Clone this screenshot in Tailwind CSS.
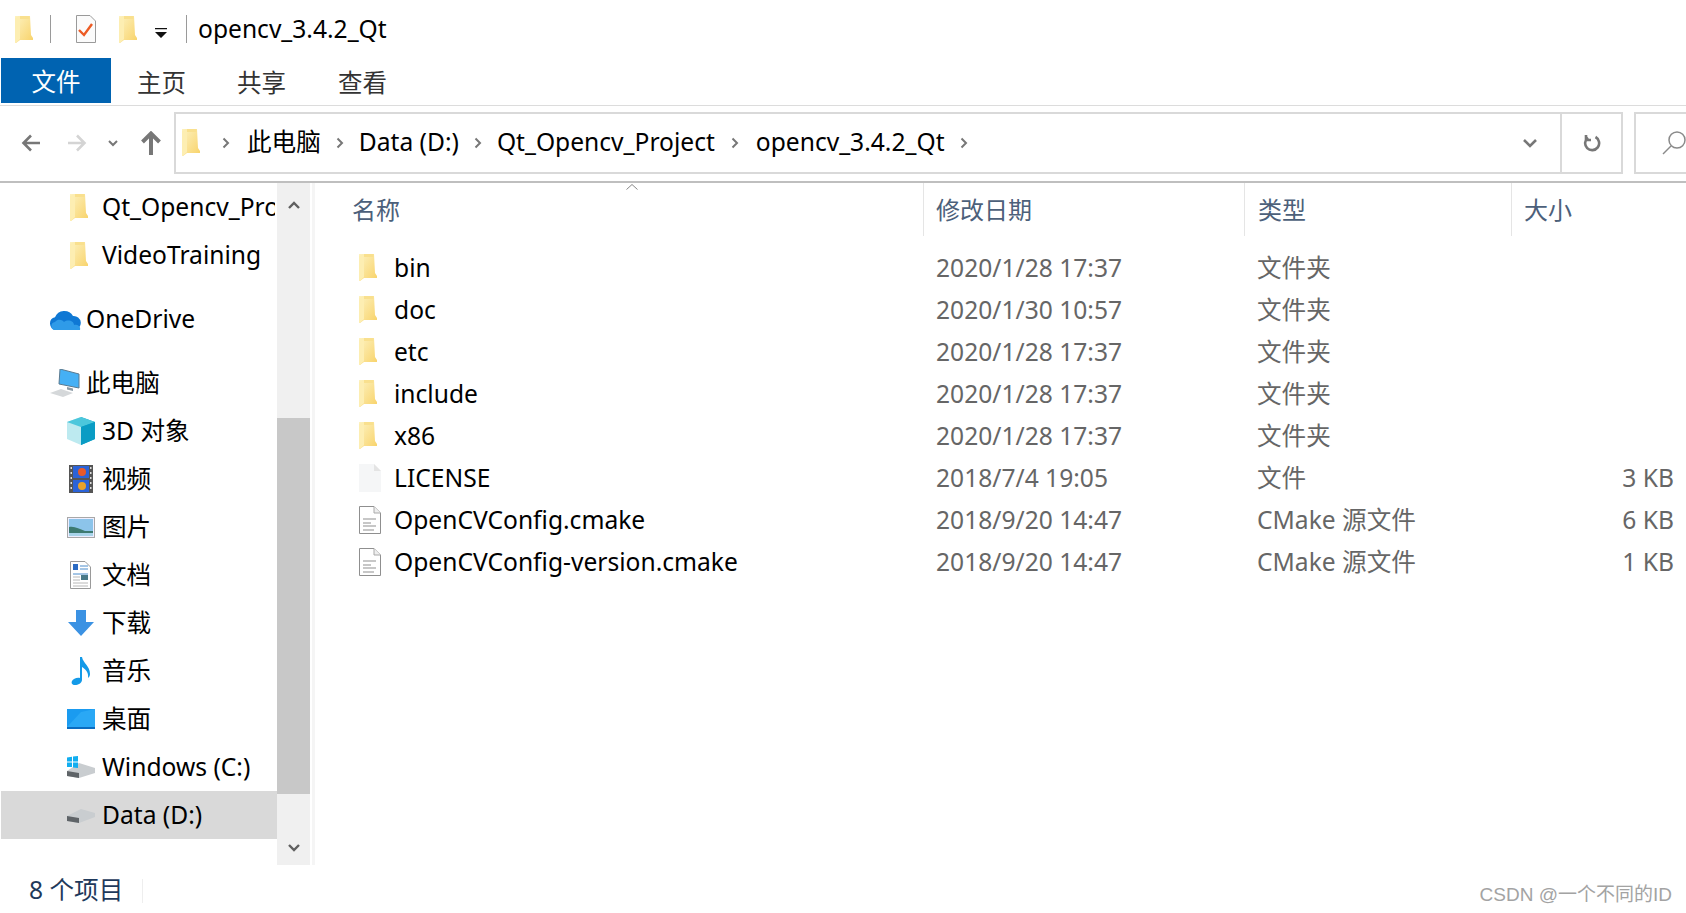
<!DOCTYPE html>
<html lang="zh">
<head>
  <meta charset="UTF-8" />
  <title>opencv_3.4.2_Qt</title>
  <script src="https://cdn.jsdelivr.net/npm/@tailwindcss/browser@4"></script>
</head>
<body class="bg-white text-black overflow-hidden font-['Noto_Sans','Noto_Sans_CJK_SC',sans-serif]">

  <!-- shared icons -->
  <svg class="absolute w-0 h-0">
    <defs>
      <linearGradient id="fg" x1="0" y1="0" x2="1" y2="1">
        <stop offset="0" stop-color="#fdf2c0" />
        <stop offset="1" stop-color="#f8d268" />
      </linearGradient>
      <symbol id="folder" viewBox="0 0 18 27">
        <path d="M0 0H15L16 19L18 22V24H5L1 27H0Z" fill="url(#fg)" />
        <path d="M0 2L5 0V23L1 27H0Z" fill="#fdeeb2" />
        <path d="M5 0H14.500V3H5Z" fill="#f9e08e" />
      </symbol>
      <symbol id="textfile" viewBox="0 0 22 28">
        <path d="M.5 .5H15L21.500 7V27.500H.5Z" fill="#fff" stroke="#8f8f8f" />
        <path d="M15 .5V7H21.500" fill="#eee" stroke="#aaa" />
        <path d="M4 13H17M4 17H12M4 20H17M4 24H15" stroke="#b5b5b5" stroke-width="1.500" />
      </symbol>
    </defs>
  </svg>

  <!-- Title bar -->
  <div class="h-[58px] flex items-center">
    <svg class="w-[18px] h-[27px] ml-[15px]"><use href="#folder" /></svg>
    <div class="w-px h-[28px] bg-[#9a9a9a] ml-[17px]"></div>
    <svg class="w-[20px] h-[28px] ml-[25px]" viewBox="0 0 20 28">
      <path d="M.5 .5H14L19.500 6V27.500H.5Z" fill="#fbfbfb" stroke="#9a9a9a" />
      <path d="M3 15L8 20L16 9" fill="none" stroke="#ec5b24" stroke-width="2.400" />
    </svg>
    <svg class="w-[18px] h-[27px] ml-[23px]"><use href="#folder" /></svg>
    <svg class="w-[14px] h-[14px] ml-[17px] mt-2" viewBox="0 0 14 14">
      <path d="M1 2H13V3.200H1ZM1 6H13L7 12Z" fill="#111" />
    </svg>
    <div class="w-px h-[28px] bg-[#9a9a9a] ml-[18px]"></div>
    <span class="ml-[11px] text-[24.6px] leading-none">opencv_3.4.2_Qt</span>
  </div>

  <!-- Ribbon tabs -->
  <div class="h-[48px] flex items-stretch border-b border-[#dcdcdc] text-[24.5px] text-[#333]">
    <div class="ml-px w-[110px] h-[45px] bg-[#0063b1] text-white flex items-center justify-center pt-[3px]">文件</div>
    <div class="w-[101px] flex items-center justify-center pt-[3px]">主页</div>
    <div class="w-[99px] flex items-center justify-center pt-[3px]">共享</div>
    <div class="w-[103px] flex items-center justify-center pt-[3px]">查看</div>
  </div>

  <!-- Nav row -->
  <div class="h-[77px] flex items-center border-b-2 border-[#bfbfbf] pb-[2px] text-[24.6px]">
    <svg class="w-5 h-5 ml-[21px]" viewBox="0 0 20 20" fill="none" stroke="#777" stroke-width="2.600"><path d="M19 10H2M10 2.500L2.500 10L10 17.500" /></svg>
    <svg class="w-5 h-5 ml-[26px]" viewBox="0 0 20 20" fill="none" stroke="#d4d4d4" stroke-width="2.600"><path d="M1 10H18M10 2.500L17.500 10L10 17.500" /></svg>
    <svg class="w-[10px] h-[10px] ml-[21px]" viewBox="0 0 10 10" fill="none" stroke="#777" stroke-width="2"><path d="M1 3L5 7L9 3" /></svg>
    <svg class="w-5 h-[24px] ml-[23px]" viewBox="0 0 20 24" fill="none" stroke="#777" stroke-width="4"><path d="M10 24V3M1.500 11L10 2.500L18.500 11" /></svg>
    <div class="ml-[13px] w-[1450px] h-[62px] border-2 border-[#d9d9d9] flex items-center">
      <svg class="w-[18px] h-[27px] ml-[6px]"><use href="#folder" /></svg>
      <svg class="w-2 h-3 ml-[22px]" viewBox="0 0 8 12" fill="none" stroke="#777" stroke-width="2"><path d="M1.500 1.500L6 6L1.500 10.500" /></svg>
      <span class="ml-[17px]">此电脑</span>
      <svg class="w-2 h-3 ml-[15px]" viewBox="0 0 8 12" fill="none" stroke="#777" stroke-width="2"><path d="M1.500 1.500L6 6L1.500 10.500" /></svg>
      <span class="ml-[15px]">Data (D:)</span>
      <svg class="w-2 h-3 ml-[15px]" viewBox="0 0 8 12" fill="none" stroke="#777" stroke-width="2"><path d="M1.500 1.500L6 6L1.500 10.500" /></svg>
      <span class="ml-[15px]">Qt_Opencv_Project</span>
      <svg class="w-2 h-3 ml-[16px]" viewBox="0 0 8 12" fill="none" stroke="#777" stroke-width="2"><path d="M1.500 1.500L6 6L1.500 10.500" /></svg>
      <span class="ml-[17px]">opencv_3.4.2_Qt</span>
      <svg class="w-2 h-3 ml-[15px]" viewBox="0 0 8 12" fill="none" stroke="#777" stroke-width="2"><path d="M1.500 1.500L6 6L1.500 10.500" /></svg>
      <svg class="w-[14px] h-[10px] ml-auto mr-[23px]" viewBox="0 0 14 10" fill="none" stroke="#777" stroke-width="2.600"><path d="M1 2L7 8L13 2" /></svg>
      <div class="w-[61px] h-full border-l-2 border-[#d9d9d9] flex items-center justify-center">
        <svg class="w-[18px] h-[18px]" viewBox="0 0 18 18" fill="none" stroke="#777" stroke-width="2.600"><path d="M5 3.500A7 7 0 1 0 12.500 3M3 1V6H8" /></svg>
      </div>
    </div>
    <div class="ml-[11px] flex-1 h-[62px] border-2 border-r-0 border-[#d9d9d9] flex items-center">
      <svg class="ml-[26px] w-[24px] h-[26px]" viewBox="0 0 24 26" fill="none" stroke="#8a8a8a" stroke-width="1.500"><circle cx="15" cy="10" r="8" /><path d="M9 16L1 24" /></svg>
    </div>
  </div>

  <div class="h-[682px] flex">
    <!-- Sidebar -->
    <div class="w-[277px] shrink-0 text-[24.6px]">
      <div class="h-[48px] w-[275px] overflow-hidden flex items-center pl-[70px] gap-[14px] whitespace-nowrap"><svg class="w-[18px] h-[27px] shrink-0"><use href="#folder" /></svg><span>Qt_Opencv_Project</span></div>
      <div class="h-[48px] flex items-center pl-[70px] gap-[14px]"><svg class="w-[18px] h-[27px] shrink-0"><use href="#folder" /></svg><span>VideoTraining</span></div>
      <div class="h-[64px] mt-[8px] flex items-center pl-[49px] gap-[5px]">
        <svg class="w-8 h-[21px]" viewBox="0 0 32 21">
          <path d="M7 21A6.500 6.500 0 0 1 6 8.200A10 10 0 0 1 24 7A7 7 0 0 1 25.500 21Z" fill="#0f78d4" />
          <path d="M7 21A4 4 0 0 1 6 13C9 9 14 11 15 13C19 10 25 12 25 16C29 15 32 18 31 21Z" fill="#2f9be8" />
        </svg>
        <span>OneDrive</span>
      </div>
      <div class="h-[64px] flex items-center pl-[49px] gap-[6px]">
        <svg class="w-[31px] h-[28px]" viewBox="0 0 31 28">
          <path d="M11 0L30 5V19L10 15Z" fill="#45b0f5" stroke="#5a7a90" />
          <path d="M18 18L24 19.500V22L18 20.500Z" fill="#8a9aa5" />
          <path d="M1 24L12 20L24 24L14 28Z" fill="#d5d8da" />
        </svg>
        <span>此电脑</span>
      </div>
      <div class="h-[48px] -mt-[8px] flex items-center pl-[67px] gap-[7px]">
        <svg class="w-[28px] h-[28px]" viewBox="0 0 28 28">
          <path d="M14 0L28 5V22L14 28Z" fill="#0da5c9" />
          <path d="M14 0L0 5V22L14 28Z" fill="#bdeaf0" />
          <path d="M0 5L14 10L28 5L14 0Z" fill="#4cc7dc" />
          <path d="M14 10V28L28 22V5Z" fill="#0a9cc4" />
        </svg>
        <span>3D 对象</span>
      </div>
      <div class="h-[48px] flex items-center pl-[69px] gap-[9px]">
        <svg class="w-6 h-7" viewBox="0 0 24 28">
          <rect width="24" height="28" fill="#555" />
          <rect x="4" y="1" width="16" height="12" fill="#2b63d8" />
          <rect x="4" y="15" width="16" height="12" fill="#2b63d8" />
          <circle cx="13" cy="7" r="4" fill="#e85a2a" />
          <circle cx="13" cy="21" r="4" fill="#e8a22a" />
          <path d="M1.500 3H3M1.500 8H3M1.500 13H3M1.500 18H3M1.500 23H3M21 3H22.500M21 8H22.500M21 13H22.500M21 18H22.500M21 23H22.500" stroke="#ddd" stroke-width="2" />
        </svg>
        <span>视频</span>
      </div>
      <div class="h-[48px] flex items-center pl-[67px] gap-[7px]">
        <svg class="w-7 h-[21px]" viewBox="0 0 28 21">
          <rect x=".5" y=".5" width="27" height="20" fill="#eef" stroke="#a8a8a8" />
          <rect x="2" y="2" width="24" height="17" fill="#8cc4ea" />
          <path d="M2 10C8 9 12 12 18 14H26V19H2Z" fill="#3d7a70" />
          <path d="M2 16H26V19H2Z" fill="#a8d4ea" />
        </svg>
        <span>图片</span>
      </div>
      <div class="h-[48px] flex items-center pl-[70px] gap-[11px]">
        <svg class="w-[21px] h-7" viewBox="0 0 21 28">
          <path d="M.5 .5H15L20.500 6V27.500H.5Z" fill="#fff" stroke="#9a9a9a" />
          <path d="M3 3H8V9H3Z" fill="#2c6bc4" />
          <path d="M10 5H18M10 8H18M3 13H18" stroke="#4a8ccc" />
          <rect x="11" y="14" width="7" height="5" fill="#4a7a88" />
          <path d="M3 16H10M3 19H10M3 22H18M3 25H18" stroke="#b8b8b8" />
        </svg>
        <span>文档</span>
      </div>
      <div class="h-[48px] flex items-center pl-[68px] gap-[8px]">
        <svg class="w-[26px] h-[26px]" viewBox="0 0 26 26"><path d="M8 0H18V12H26L13 26L0 12H8Z" fill="#3b92e3" /></svg>
        <span>下载</span>
      </div>
      <div class="h-[48px] flex items-center pl-[71px] gap-[11px]">
        <svg class="w-[20px] h-7" viewBox="0 0 20 28">
          <path d="M9 0H11C12 6 19 9 19 17C19 19 18 20 17 21C18 15 14 12 11 10V23C11 26 7 28 4 28C1 28 0 26 1 24C2 22 6 20 9 21Z" fill="#149ae8" />
        </svg>
        <span>音乐</span>
      </div>
      <div class="h-[48px] flex items-center pl-[67px] gap-[7px]">
        <svg class="w-7 h-5" viewBox="0 0 28 20">
          <rect width="28" height="20" fill="#1a9bf0" />
          <path d="M0 18L14 3L28 0V18Z" fill="#2aa8f5" />
          <path d="M0 18H28V20H0Z" fill="#0a6cc0" />
        </svg>
        <span>桌面</span>
      </div>
      <div class="h-[48px] flex items-center pl-[67px] gap-[7px]">
        <svg class="w-7 h-[22px]" viewBox="0 0 28 22">
          <path d="M0 15L12 7L28 12V17L12 22L0 20Z" fill="#c9cdd0" />
          <path d="M0 15L12 17V22L0 20Z" fill="#5f6468" />
          <path d="M0 1.500L5 .7V5.500H0ZM6 .5L11 0V5.500H6ZM0 6.500H5V11H0ZM6 6.500H11V12L6 11.500Z" fill="#12aef0" />
        </svg>
        <span>Windows (C:)</span>
      </div>
      <div class="h-[48px] ml-px bg-[#d9d9d9] flex items-center pl-[66px] gap-[7px]">
        <svg class="w-7 h-[15px]" viewBox="0 0 28 15">
          <path d="M0 8L14 1L28 5V9L12 15L0 13Z" fill="#c9cdd0" />
          <path d="M0 8L12 10V15L0 13Z" fill="#5f6468" />
        </svg>
        <span>Data (D:)</span>
      </div>
    </div>

    <!-- Sidebar scrollbar -->
    <div class="w-[33px] shrink-0 bg-[#f0f0f0] flex flex-col items-center">
      <div class="h-[44px] w-full flex items-center justify-center">
        <svg class="w-3 h-2" viewBox="0 0 12 8" fill="none" stroke="#606060" stroke-width="2.400"><path d="M1 7L6 2L11 7" /></svg>
      </div>
      <div class="h-[191px]"></div>
      <div class="w-full h-[376px] bg-[#c8c8c8]"></div>
      <div class="mt-auto h-[34px] w-full flex items-center justify-center">
        <svg class="w-3 h-2" viewBox="0 0 12 8" fill="none" stroke="#606060" stroke-width="2.400"><path d="M1 1L6 6L11 1" /></svg>
      </div>
    </div>
    <div class="w-[3px] ml-[2px] bg-[#f5f5f5]"></div>

    <!-- File list -->
    <div class="flex-1 min-w-0 relative">
      <svg class="absolute left-[311px] top-0 w-3 h-2" viewBox="0 0 12 8" fill="none" stroke="#888"><path d="M.5 6.500L6 1.500L11.500 6.500" /></svg>
      <div class="grid grid-cols-[608px_321px_267px_1fr] h-[53px] text-[24px] text-[#4c607a]">
        <div class="pl-[37px] flex items-center">名称</div>
        <div class="pl-[12px] flex items-center border-l border-[#e5e5e5]">修改日期</div>
        <div class="pl-[13px] flex items-center border-l border-[#e5e5e5]">类型</div>
        <div class="pl-[12px] flex items-center border-l border-[#e5e5e5]">大小</div>
      </div>
      <div class="pt-[11px] text-[24.6px]">
        <div class="grid grid-cols-[608px_321px_267px_1fr] h-[42px] items-center">
          <div class="pl-[44px] flex items-center gap-[17px]"><svg class="w-[18px] h-[27px]"><use href="#folder" /></svg>bin</div>
          <div class="pl-[13px] text-[#666]">2020/1/28 17:37</div><div class="pl-[13px] text-[#666]">文件夹</div><div></div>
        </div>
        <div class="grid grid-cols-[608px_321px_267px_1fr] h-[42px] items-center">
          <div class="pl-[44px] flex items-center gap-[17px]"><svg class="w-[18px] h-[27px]"><use href="#folder" /></svg>doc</div>
          <div class="pl-[13px] text-[#666]">2020/1/30 10:57</div><div class="pl-[13px] text-[#666]">文件夹</div><div></div>
        </div>
        <div class="grid grid-cols-[608px_321px_267px_1fr] h-[42px] items-center">
          <div class="pl-[44px] flex items-center gap-[17px]"><svg class="w-[18px] h-[27px]"><use href="#folder" /></svg>etc</div>
          <div class="pl-[13px] text-[#666]">2020/1/28 17:37</div><div class="pl-[13px] text-[#666]">文件夹</div><div></div>
        </div>
        <div class="grid grid-cols-[608px_321px_267px_1fr] h-[42px] items-center">
          <div class="pl-[44px] flex items-center gap-[17px]"><svg class="w-[18px] h-[27px]"><use href="#folder" /></svg>include</div>
          <div class="pl-[13px] text-[#666]">2020/1/28 17:37</div><div class="pl-[13px] text-[#666]">文件夹</div><div></div>
        </div>
        <div class="grid grid-cols-[608px_321px_267px_1fr] h-[42px] items-center">
          <div class="pl-[44px] flex items-center gap-[17px]"><svg class="w-[18px] h-[27px]"><use href="#folder" /></svg>x86</div>
          <div class="pl-[13px] text-[#666]">2020/1/28 17:37</div><div class="pl-[13px] text-[#666]">文件夹</div><div></div>
        </div>
        <div class="grid grid-cols-[608px_321px_267px_1fr] h-[42px] items-center">
          <div class="pl-[44px] flex items-center gap-[13px]">
            <svg class="w-[22px] h-[28px]" viewBox="0 0 22 28"><path d="M0 0H15L22 7V28H0Z" fill="#f5f6f7" /><path d="M15 0V7H22Z" fill="#e4e4e4" /></svg>LICENSE
          </div>
          <div class="pl-[13px] text-[#666]">2018/7/4 19:05</div><div class="pl-[13px] text-[#666]">文件</div><div class="text-right pr-[12px] text-[#666]">3 KB</div>
        </div>
        <div class="grid grid-cols-[608px_321px_267px_1fr] h-[42px] items-center">
          <div class="pl-[44px] flex items-center gap-[13px]"><svg class="w-[22px] h-[28px]"><use href="#textfile" /></svg>OpenCVConfig.cmake</div>
          <div class="pl-[13px] text-[#666]">2018/9/20 14:47</div><div class="pl-[13px] text-[#666]">CMake 源文件</div><div class="text-right pr-[12px] text-[#666]">6 KB</div>
        </div>
        <div class="grid grid-cols-[608px_321px_267px_1fr] h-[42px] items-center">
          <div class="pl-[44px] flex items-center gap-[13px]"><svg class="w-[22px] h-[28px]"><use href="#textfile" /></svg>OpenCVConfig-version.cmake</div>
          <div class="pl-[13px] text-[#666]">2018/9/20 14:47</div><div class="pl-[13px] text-[#666]">CMake 源文件</div><div class="text-right pr-[12px] text-[#666]">1 KB</div>
        </div>
      </div>
    </div>
  </div>

  <!-- Status bar -->
  <div class="h-[48px] flex items-center relative pt-[3px]">
    <span class="ml-[29px] text-[24.6px] text-[#1e395b]">8 个项目</span>
    <div class="w-px h-[24px] ml-[19px] bg-[#eeeeee]"></div>
    <span class="absolute right-[14px] top-[20px] text-[19px] leading-none text-[#a3a3a3] font-['Liberation_Sans','Noto_Sans_CJK_SC',sans-serif]">CSDN @一个不同的ID</span>
  </div>

</body>
</html>
